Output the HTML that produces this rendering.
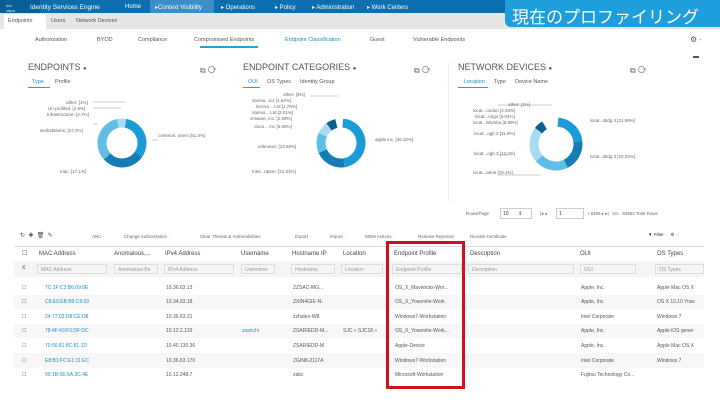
<!DOCTYPE html>
<html><head><meta charset="utf-8"><style>
*{margin:0;padding:0;box-sizing:border-box}
body{width:720px;height:405px;overflow:hidden;background:#fff;font-family:"Liberation Sans",sans-serif;position:relative;color:#333}
.a{position:absolute;white-space:nowrap}
.top{position:absolute;left:0;top:0;width:720px;height:14px;background:#0d6fb0}
.nav{font-size:6px;color:#fff;top:4px}
.t2{position:absolute;left:0;top:13px;width:720px;height:16px;background:#e6e6e6}
.s{font-size:5.5px;color:#555}
.lbl{font-size:4.5px;color:#666}
.h{font-size:6px;color:#444}
.in{position:absolute;height:10px;border:1px solid #ddd;font-size:5px;color:#999;padding:2px 3px;top:264px}
.row{position:absolute;left:14px;width:690px;height:14.6px;font-size:5px;color:#555}
.row span{position:absolute;top:4.5px;white-space:nowrap}
.mac{color:#1f8dc0}
</style></head><body>
<div class="top"></div>
<div class="a" style="left:0;top:0;width:40px;height:14px;background:#0a5f99"></div>
<div class="a" style="left:6px;top:3px;font-size:4px;color:#cfe">ılıılı<br>cisco</div>
<div class="a nav" style="left:30px;font-size:6.5px">Identity Services Engine</div>
<div class="a nav" style="left:125px">Home</div>
<div class="a" style="left:150px;top:0;width:64px;height:14px;background:#3a8fc6"></div>
<div class="a nav" style="left:155px">▸Context Visibility</div>
<div class="a nav" style="left:221px">▸ Operations</div>
<div class="a nav" style="left:275px">▸ Policy</div>
<div class="a nav" style="left:312px">▸ Administration</div>
<div class="a nav" style="left:367px">▸ Work Centers</div>
<div class="t2"></div>
<div class="a" style="left:4px;top:14px;width:42px;height:15px;background:#fff"></div>
<div class="a s" style="left:8px;top:18px">Endpoints</div>
<div class="a s" style="left:51px;top:18px">Users</div>
<div class="a s" style="left:76px;top:18px">Network Devices</div>
<div class="a" style="left:505px;top:0;width:215px;height:27px;background:#1e9fdc;border-radius:0 0 0 6px"></div>
<div class="a" style="left:512px;top:3px;font-size:17px;color:#fff;font-family:'Liberation Sans','Noto Sans CJK JP',sans-serif">現在のプロファイリング</div>
<div class="a s" style="left:35px;top:37px">Authorization</div>
<div class="a s" style="left:97px;top:37px">BYOD</div>
<div class="a s" style="left:138px;top:37px">Compliance</div>
<div class="a s" style="left:194px;top:37px">Compromised Endpoints</div>
<div class="a s" style="left:285px;top:37px;color:#1f8dc0">Endpoint Classification</div>
<div class="a" style="left:200px;top:46px;width:58px;height:2px;background:#2a9fd0"></div>
<div class="a s" style="left:370px;top:37px">Guest</div>
<div class="a s" style="left:413px;top:37px">Vulnerable Endpoints</div>
<div class="a s" style="left:690px;top:35px;font-size:8px">⚙ ·</div>
<div class="a" style="left:693px;top:56px;width:6px;height:2px;background:#555"></div>

<div class="a" style="left:28px;top:62px;font-size:9px;color:#555">ENDPOINTS <span style="font-size:6px">●</span></div>
<div class="a s" style="left:32px;top:79px;color:#1f8dc0">Type</div><div class="a s" style="left:55px;top:79px">Profile</div>
<div class="a" style="left:28px;top:87px;width:22px;height:1px;background:#2a9fd0"></div>
<div class="a" style="left:200px;top:66px;font-size:8px;color:#666">⧉ ⟳</div>
<div class="a" style="left:243px;top:62px;font-size:9px;color:#555">ENDPOINT CATEGORIES <span style="font-size:6px">●</span></div>
<div class="a s" style="left:248px;top:79px;color:#1f8dc0">OUI</div><div class="a s" style="left:267px;top:79px">OS Types</div><div class="a s" style="left:300px;top:79px">Identity Group</div>
<div class="a" style="left:243px;top:87px;width:17px;height:1px;background:#2a9fd0"></div>
<div class="a" style="left:414px;top:66px;font-size:8px;color:#666">⧉ ⟳</div>
<div class="a" style="left:448px;top:62px;width:1px;height:140px;background:#eee"></div>
<div class="a" style="left:458px;top:62px;font-size:9px;color:#555">NETWORK DEVICES <span style="font-size:6px">●</span></div>
<div class="a s" style="left:464px;top:79px;color:#1f8dc0">Location</div><div class="a s" style="left:494px;top:79px">Type</div><div class="a s" style="left:515px;top:79px">Device Name</div>
<div class="a" style="left:458px;top:87px;width:30px;height:1px;background:#2a9fd0"></div>
<div class="a" style="left:630px;top:66px;font-size:8px;color:#666">⧉ ⟳</div>

<svg class="a" style="left:0;top:0" width="720" height="210">
<g fill="none" stroke-width="9">
<circle cx="122" cy="143" r="20" stroke="#1b9cd6" stroke-dasharray="40 200" transform="rotate(-80 122 143)"/>
<circle cx="122" cy="143" r="20" stroke="#157db5" stroke-dasharray="36 200" stroke-dashoffset="-40" transform="rotate(-80 122 143)"/>
<circle cx="122" cy="143" r="20" stroke="#5fbde6" stroke-dasharray="42 200" stroke-dashoffset="-76" transform="rotate(-80 122 143)"/>
<circle cx="122" cy="143" r="20" stroke="#a8daf2" stroke-dasharray="8 200" stroke-dashoffset="-118" transform="rotate(-80 122 143)"/>
<circle cx="341" cy="143" r="20" stroke="#1b9cd6" stroke-dasharray="58 200" transform="rotate(-85 341 143)"/>
<circle cx="341" cy="143" r="20" stroke="#157db5" stroke-dasharray="26 200" stroke-dashoffset="-58" transform="rotate(-85 341 143)"/>
<circle cx="341" cy="143" r="20" stroke="#5fbde6" stroke-dasharray="17 200" stroke-dashoffset="-84" transform="rotate(-85 341 143)"/>
<circle cx="341" cy="143" r="20" stroke="#a8daf2" stroke-dasharray="10 200" stroke-dashoffset="-101" transform="rotate(-85 341 143)"/>
<circle cx="341" cy="143" r="20" stroke="#0b5f8c" stroke-dasharray="8 200" stroke-dashoffset="-111" transform="rotate(-85 341 143)"/>
<circle cx="556" cy="144" r="22" stroke="#1b9cd6" stroke-dasharray="30 200" transform="rotate(-85 556 144)"/>
<circle cx="556" cy="144" r="22" stroke="#157db5" stroke-dasharray="27 200" stroke-dashoffset="-30" transform="rotate(-85 556 144)"/>
<circle cx="556" cy="144" r="22" stroke="#5fbde6" stroke-dasharray="29 200" stroke-dashoffset="-57" transform="rotate(-85 556 144)"/>
<circle cx="556" cy="144" r="22" stroke="#a8daf2" stroke-dasharray="30 200" stroke-dashoffset="-86" transform="rotate(-85 556 144)"/>
<circle cx="556" cy="144" r="22" stroke="#0b5f8c" stroke-dasharray="8 200" stroke-dashoffset="-116" transform="rotate(-85 556 144)"/>
</g>
<g stroke="#999" stroke-width=".5">
<line x1="93" y1="102" x2="125" y2="102"/><line x1="93" y1="108" x2="121" y2="108"/><line x1="93" y1="124" x2="98" y2="124"/><line x1="152" y1="140" x2="158" y2="140"/>
<line x1="310" y1="96" x2="338" y2="96"/><line x1="498" y1="105" x2="552" y2="105"/><line x1="498" y1="155" x2="512" y2="155"/><line x1="498" y1="175" x2="540" y2="175"/>
</g>
<g font-size="4.5" fill="#666" font-family="Liberation Sans">
<text x="66" y="104">other: [1%]</text><text x="48" y="110">Un-profiled: [1.8%]</text><text x="47" y="116">Infrastructure: [2.7%]</text>
<text x="40" y="132">workstations: [27.3%]</text><text x="158" y="137">common: users [51.4%]</text><text x="60" y="173">mac: [17.1%]</text>
<text x="283" y="96">other: [3%]</text><text x="252" y="102">samsu...ics [1.54%]</text><text x="256" y="108">lenovo... Ltd [1.75%]</text><text x="252" y="114">samsu... Ltd [2.01%]</text><text x="250" y="120">vmware, inc. [2.59%]</text><text x="254" y="128">cisco... Inc [5.05%]</text><text x="258" y="148">unknown: [13.68%]</text><text x="252" y="173">Intel...ration: [21.03%]</text><text x="375" y="141">apple inc. [46.32%]</text>
<text x="508" y="106">other: [1%]</text><text x="473" y="112">locat...ondon [2.48%]</text><text x="475" y="118">locat...ongo [3.04%]</text><text x="473" y="124">locat...Mumba [6.89%]</text><text x="474" y="135">locat...ogh 2 [11.8%]</text><text x="474" y="155">locat...ogh 3 [13.2%]</text><text x="473" y="174">locat...anne [19.1%]</text><text x="590" y="122">locat...Bldg 4 [21.99%]</text><text x="590" y="158">locat...Bldg 3 [20.03%]</text>
</g>
</svg>

<div class="a lbl" style="left:466px;top:211px">Rows/Page</div>
<div class="a" style="left:500px;top:208px;width:32px;height:11px;border:1px solid #ccc;font-size:5px;padding:2px">10 &nbsp; &nbsp; &nbsp; ⇕</div>
<div class="a lbl" style="left:540px;top:211px">|◂ ◂</div>
<div class="a" style="left:556px;top:208px;width:28px;height:11px;border:1px solid #ccc;font-size:5px;padding:2px">1</div>
<div class="a lbl" style="left:588px;top:211px">/ 9495 ▸ ▸| &nbsp; Go &nbsp; 94952 Total Rows</div>

<div class="a" style="left:20px;top:232px;font-size:6px;color:#444">↻ &nbsp;✚ &nbsp;🗑 &nbsp;✎</div>
<div class="a lbl" style="left:92px;top:234px">ANC ·</div>
<div class="a lbl" style="left:124px;top:234px">Change Authorization ·</div>
<div class="a lbl" style="left:200px;top:234px">Clear Threats &amp; Vulnerabilities</div>
<div class="a lbl" style="left:295px;top:234px">Export ·</div>
<div class="a lbl" style="left:330px;top:234px">Import ·</div>
<div class="a lbl" style="left:365px;top:234px">MDM Actions ·</div>
<div class="a lbl" style="left:418px;top:234px">Release Rejected</div>
<div class="a lbl" style="left:470px;top:234px">Revoke Certificate</div>
<div class="a lbl" style="left:648px;top:232px;color:#333">▼ Filter · &nbsp; ⚙ ·</div>

<div class="a" style="left:14px;top:246px;width:690px;height:1px;background:#ddd"></div>
<div class="a h" style="left:22px;top:250px">☐</div>
<div class="a h" style="left:39px;top:251px">MAC Address</div>
<div class="a h" style="left:114px;top:251px">Anomalous,...</div>
<div class="a h" style="left:165px;top:251px">IPv4 Address</div>
<div class="a h" style="left:241px;top:251px">Username</div>
<div class="a h" style="left:292px;top:251px">Hostname IP</div>
<div class="a h" style="left:343px;top:251px">Location</div>
<div class="a h" style="left:394px;top:251px">Endpoint Profile</div>
<div class="a h" style="left:470px;top:251px">Description</div>
<div class="a h" style="left:580px;top:251px">OUI</div>
<div class="a h" style="left:657px;top:251px">OS Types</div>
<div class="a" style="left:14px;top:261px;width:690px;height:16px;background:#f5f5f5"></div>
<div class="a h" style="left:22px;top:265px;font-size:5px">X</div>
<div class="in" style="left:37px;width:70px">MAC Address</div>
<div class="in" style="left:114px;width:44px">Anomalous Be</div>
<div class="in" style="left:164px;width:70px">IPv4 Address</div>
<div class="in" style="left:241px;width:34px">Username</div>
<div class="in" style="left:291px;width:44px">Hostname</div>
<div class="in" style="left:341px;width:42px">Location</div>
<div class="in" style="left:392px;width:70px">Endpoint Profile</div>
<div class="in" style="left:468px;width:106px">Description</div>
<div class="in" style="left:580px;width:56px">OUI</div>
<div class="in" style="left:655px;width:49px">OS Types</div>

<div class="row" style="top:280px;background:#fff"><span style="left:8px">☐</span><span class="mac" style="left:31px">7C:1F:C2:B6:09:0E</span><span style="left:152px">10.36.63.13</span><span style="left:279px">ZZSAC-MG...</span><span style="left:381px">OS_X_Mavericks-Wor...</span><span style="left:567px">Apple, Inc.</span><span style="left:643px">Apple Mac OS X</span></div>
<div class="row" style="top:294.6px;background:#f7f7f7"><span style="left:8px">☐</span><span class="mac" style="left:31px">C8:E0:EB:B9:C6:03</span><span style="left:152px">10.34.93.18</span><span style="left:279px">ZXIN4GIE-N-</span><span style="left:381px">OS_X_Yosemite-Work</span><span style="left:567px">Apple, Inc.</span><span style="left:643px">OS X 10.10 Yose</span></div>
<div class="row" style="top:309.2px;background:#fff"><span style="left:8px">☐</span><span class="mac" style="left:31px">24:77:03:D8:CE:D8</span><span style="left:152px">10.36.63.21</span><span style="left:279px">zzhaleo-W8</span><span style="left:381px">Windows7-Workstation</span><span style="left:567px">Intel Corporate</span><span style="left:643px">Windows 7</span></div>
<div class="row" style="top:323.8px;background:#f7f7f7"><span style="left:8px">☐</span><span class="mac" style="left:31px">78:4F:43:F3:DF:DC</span><span style="left:152px">10.12.2.133</span><span class="mac" style="left:228px">zsanchi</span><span style="left:279px">ZSARIEDD-M...</span><span style="left:329px">SJC » SJC18 »</span><span style="left:381px">OS_X_Yosemite-Work...</span><span style="left:567px">Apple, Inc.</span><span style="left:643px">Apple iOS gener</span></div>
<div class="row" style="top:338.4px;background:#fff"><span style="left:8px">☐</span><span class="mac" style="left:31px">70:56:81:8C:81:1D</span><span style="left:152px">10.40.130.36</span><span style="left:279px">ZSARIEDD-M</span><span style="left:381px">Apple-Device</span><span style="left:567px">Apple, Inc.</span><span style="left:643px">Apple Mac OS X</span></div>
<div class="row" style="top:353px;background:#f7f7f7"><span style="left:8px">☐</span><span class="mac" style="left:31px">E8:B1:FC:E1:11:EC</span><span style="left:152px">10.36.63.170</span><span style="left:279px">ZGIN8-2117A</span><span style="left:381px">Windows7-Workstation</span><span style="left:567px">Intel Corporate</span><span style="left:643px">Windows 7</span></div>
<div class="row" style="top:367.6px;background:#fff"><span style="left:8px">☐</span><span class="mac" style="left:31px">90:1B:0E:5A:3C:4E</span><span style="left:152px">10.12.248.7</span><span style="left:279px">zabc</span><span style="left:381px">Microsoft-Workstation</span><span style="left:567px">Fujitsu Technology Co...</span></div>

<div class="a" style="left:386px;top:241px;width:79px;height:148px;border:3px solid #d0101a"></div>
</body></html>
